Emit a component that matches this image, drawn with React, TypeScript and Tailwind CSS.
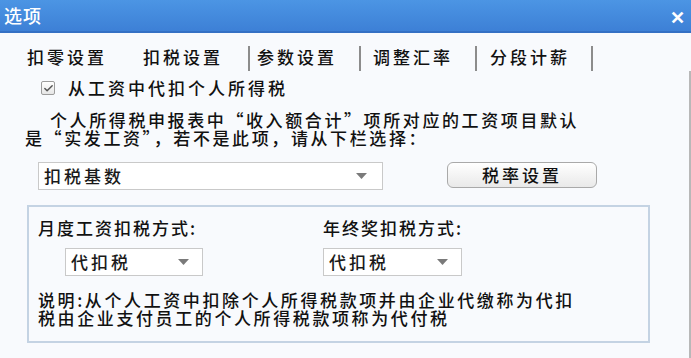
import { Check } from 'lucide-react'

const font = { fontFamily: '"Noto Sans CJK SC", "Liberation Sans", sans-serif' }

function Arrow() {
  return (
    <svg width="11" height="6" viewBox="0 0 11 6" className="shrink-0">
      <path d="M0 0 H11 L5.5 6 Z" fill="#7a7a7a" />
    </svg>
  )
}

function Select({ value, width, arrowRight }: { value: string; width: string; arrowRight: string }) {
  return (
    <div className={`flex h-[28px] items-center justify-between border border-[#c9c9c9] bg-white pl-[5px] ${width} ${arrowRight}`}>
      <span className="text-[17px] leading-[18px] tracking-[3px] text-[#1a1a1a]">{value}</span>
      <Arrow />
    </div>
  )
}

const tabs = [
  { label: '扣零设置', ml: 'ml-0', sepMl: '' },
  { label: '扣税设置', ml: 'ml-[36px]', sepMl: 'ml-[25px]' },
  { label: '参数设置', ml: 'ml-[7px]', sepMl: 'ml-[22px]' },
  { label: '调整汇率', ml: 'ml-[12px]', sepMl: 'ml-[22px]' },
  { label: '分段计薪', ml: 'ml-[13px]', sepMl: 'ml-[21px]' },
]

export default function App() {
  return (
    <div className="flex h-[358px] w-[691px] flex-col overflow-hidden bg-[#f8fafd] font-medium text-[#111]" style={font}>
      {/* title bar */}
      <div className="flex h-[33px] shrink-0 items-center justify-between border-b-2 border-[#3470c4] bg-gradient-to-b from-[#4c95e4] to-[#3d80d6] pl-[4px] pr-[6px]">
        <span className="text-[18px] tracking-[1px] text-white">选项</span>
        <span className="text-[18px] font-bold leading-none text-white">✕</span>
      </div>

      {/* tabs */}
      <div className="flex h-[38px] shrink-0 items-end pl-[27px]">
        {tabs.map((t, i) => (
          <div key={t.label} className="flex items-end">
            {i > 1 && <div className={`h-[25px] w-[2px] bg-[#8c8c8c] ${tabs[i - 1].sepMl}`} />}
            <span className={`mb-[5px] w-[80px] text-[17px] leading-[18px] tracking-[3px] ${t.ml}`}>{t.label}</span>
          </div>
        ))}
        <div className="ml-[21px] h-[25px] w-[2px] bg-[#8c8c8c]" />
      </div>

      {/* panel */}
      <div className="flex flex-1 flex-col border-r-2 border-[#b8b8b8] pt-[7px]">
        <div className="flex h-[20px] items-center pl-[41px]">
          <div className="flex h-[14px] w-[14px] items-center justify-center rounded-[2px] border border-[#9c9c9c] bg-gradient-to-b from-white to-[#e6e6e6]">
            <Check size={11} strokeWidth={3.2} color="#555" />
          </div>
          <span className="ml-[13px] text-[17px] leading-[18px] tracking-[3px]">从工资中代扣个人所得税</span>
        </div>

        <div className="mt-[13px] text-[17px] leading-[18px] tracking-[2.6px]">
          <div className="pl-[50px]">个人所得税申报表中“收入额合计”项所对应的工资项目默认</div>
          <div className="pl-[25px]">是“实发工资”，若不是此项，请从下栏选择：</div>
        </div>

        <div className="mt-[15px] flex items-start pl-[38px]">
          <Select value="扣税基数" width="w-[345px]" arrowRight="pr-[15px]" />
          <button className="ml-[64px] flex h-[26px] w-[150px] items-center justify-center rounded-[6px] border border-[#a9a9a9] bg-gradient-to-b from-white to-[#e9e9e9] text-[17px] leading-[18px] tracking-[3px]">
            税率设置
          </button>
        </div>

        <div className="ml-[27px] mt-[15px] flex h-[138px] w-[623px] flex-col border-2 border-[#c4d3e3] pl-[9px] pt-[12px]">
          <div className="flex">
            <div className="flex w-[285px] flex-col">
              <span className="text-[17px] leading-[18px] tracking-[2px]">月度工资扣税方式:</span>
              <div className="mt-[11px] pl-[27px]">
                <Select value="代扣税" width="w-[138px]" arrowRight="pr-[13px]" />
              </div>
            </div>
            <div className="flex flex-col">
              <span className="text-[17px] leading-[18px] tracking-[2px]">年终奖扣税方式:</span>
              <div className="mt-[11px]">
                <Select value="代扣税" width="w-[139px]" arrowRight="pr-[13px]" />
              </div>
            </div>
          </div>
          <div className="mt-[15px] text-[17px] leading-[18px] tracking-[2.6px]">
            <div>说明:从个人工资中扣除个人所得税款项并由企业代缴称为代扣</div>
            <div>税由企业支付员工的个人所得税款项称为代付税</div>
          </div>
        </div>
      </div>
    </div>
  )
}
